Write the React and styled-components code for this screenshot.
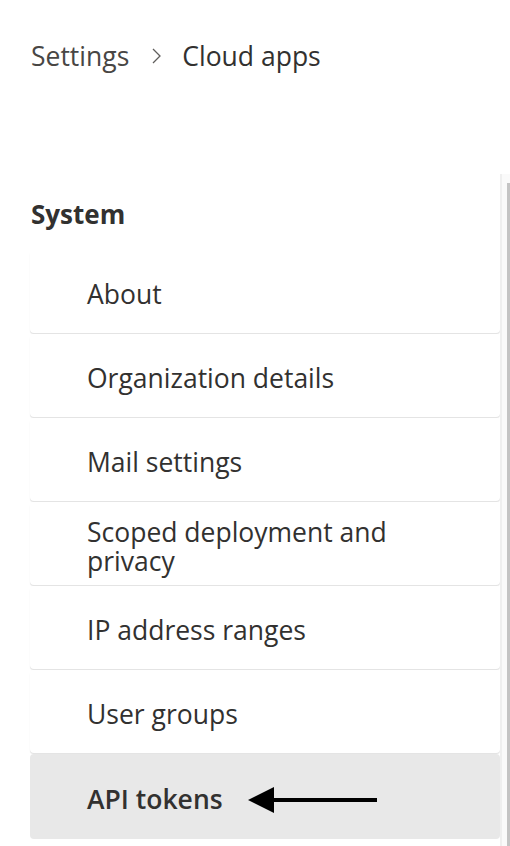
import React from 'react';
import styled, { createGlobalStyle } from 'styled-components';

const GlobalStyle = createGlobalStyle`
  html, body {
    margin: 0;
    padding: 0;
    background: #ffffff;
  }
  body {
    font-family: "Open Sans", "Noto Sans", Arial, sans-serif;
    color: #323130;
  }
`;

const Page = styled.div`
  width: 510px;
  height: 846px;
  overflow: hidden;
  box-sizing: border-box;
  padding: 37px 0 0 31px;
`;

const Breadcrumb = styled.nav`
  display: flex;
  align-items: center;
  height: 38px;
  font-size: 26.5px;
`;

const Crumb = styled.span`
  color: ${(p) => (p.current ? '#323130' : '#484644')};
`;

const Chevron = styled.svg`
  width: 14px;
  height: 18px;
  margin: 0 19px 0 20px;
`;

const Pane = styled.div`
  display: flex;
  margin-top: 99px;
  margin-left: -1px;
`;

const List = styled.div`
  width: 470px;
  padding-top: 21px;
`;

const SectionTitle = styled.h2`
  margin: 0 0 0 1px;
  height: 38px;
  line-height: 38px;
  font-size: 26px;
  font-weight: 700;
  color: #323130;
`;

const Items = styled.ul`
  list-style: none;
  margin: 17px 0 0;
  padding: 0;
  display: flex;
  flex-direction: column;
  gap: 1px;
`;

const Item = styled.li`
  display: flex;
  align-items: center;
  height: ${(p) => (p.selected ? '85px' : '83px')};
  box-sizing: border-box;
  padding: 6px 20px 0 57px;
  border-radius: 4px;
  background: ${(p) => (p.selected ? '#e8e8e8' : '#ffffff')};
  box-shadow: ${(p) => (p.selected ? 'none' : '0 1.5px 1px -0.5px rgba(0, 0, 0, 0.12)')};
  font-size: 26.5px;
  line-height: 29px;
  font-weight: ${(p) => (p.selected ? 600 : 400)};
  color: #323130;
`;

const Arrow = styled.svg`
  width: 130px;
  height: 28px;
  margin-left: 25px;
  flex-shrink: 0;
`;

const Track = styled.div`
  width: 8px;
  border-left: 2px solid #efefef;
  background: #fafafa;
  display: flex;
  justify-content: flex-end;
  padding-top: 9px;
`;

const Thumb = styled.div`
  width: 3px;
  height: 700px;
  background: #c4c4c4;
`;

const items = [
  'About',
  'Organization details',
  'Mail settings',
  'Scoped deployment and privacy',
  'IP address ranges',
  'User groups',
];

export default function App() {
  return (
    <>
      <GlobalStyle />
      <Page>
        <Breadcrumb>
          <Crumb>Settings</Crumb>
          <Chevron viewBox="0 0 14 18">
            <path d="M4 2 L11 9 L4 16" fill="none" stroke="#605e5c" strokeWidth="1.3" />
          </Chevron>
          <Crumb current>Cloud apps</Crumb>
        </Breadcrumb>
        <Pane>
          <List>
            <SectionTitle>System</SectionTitle>
            <Items>
              {items.map((label) => (
                <Item key={label}>{label}</Item>
              ))}
              <Item selected>
                API tokens
                <Arrow viewBox="0 0 130 28">
                  <polygon points="0,14 26,1 26,27" fill="#000" />
                  <line x1="24" y1="14" x2="129" y2="14" stroke="#000" strokeWidth="4" />
                </Arrow>
              </Item>
            </Items>
          </List>
          <Track>
            <Thumb />
          </Track>
        </Pane>
      </Page>
    </>
  );
}
